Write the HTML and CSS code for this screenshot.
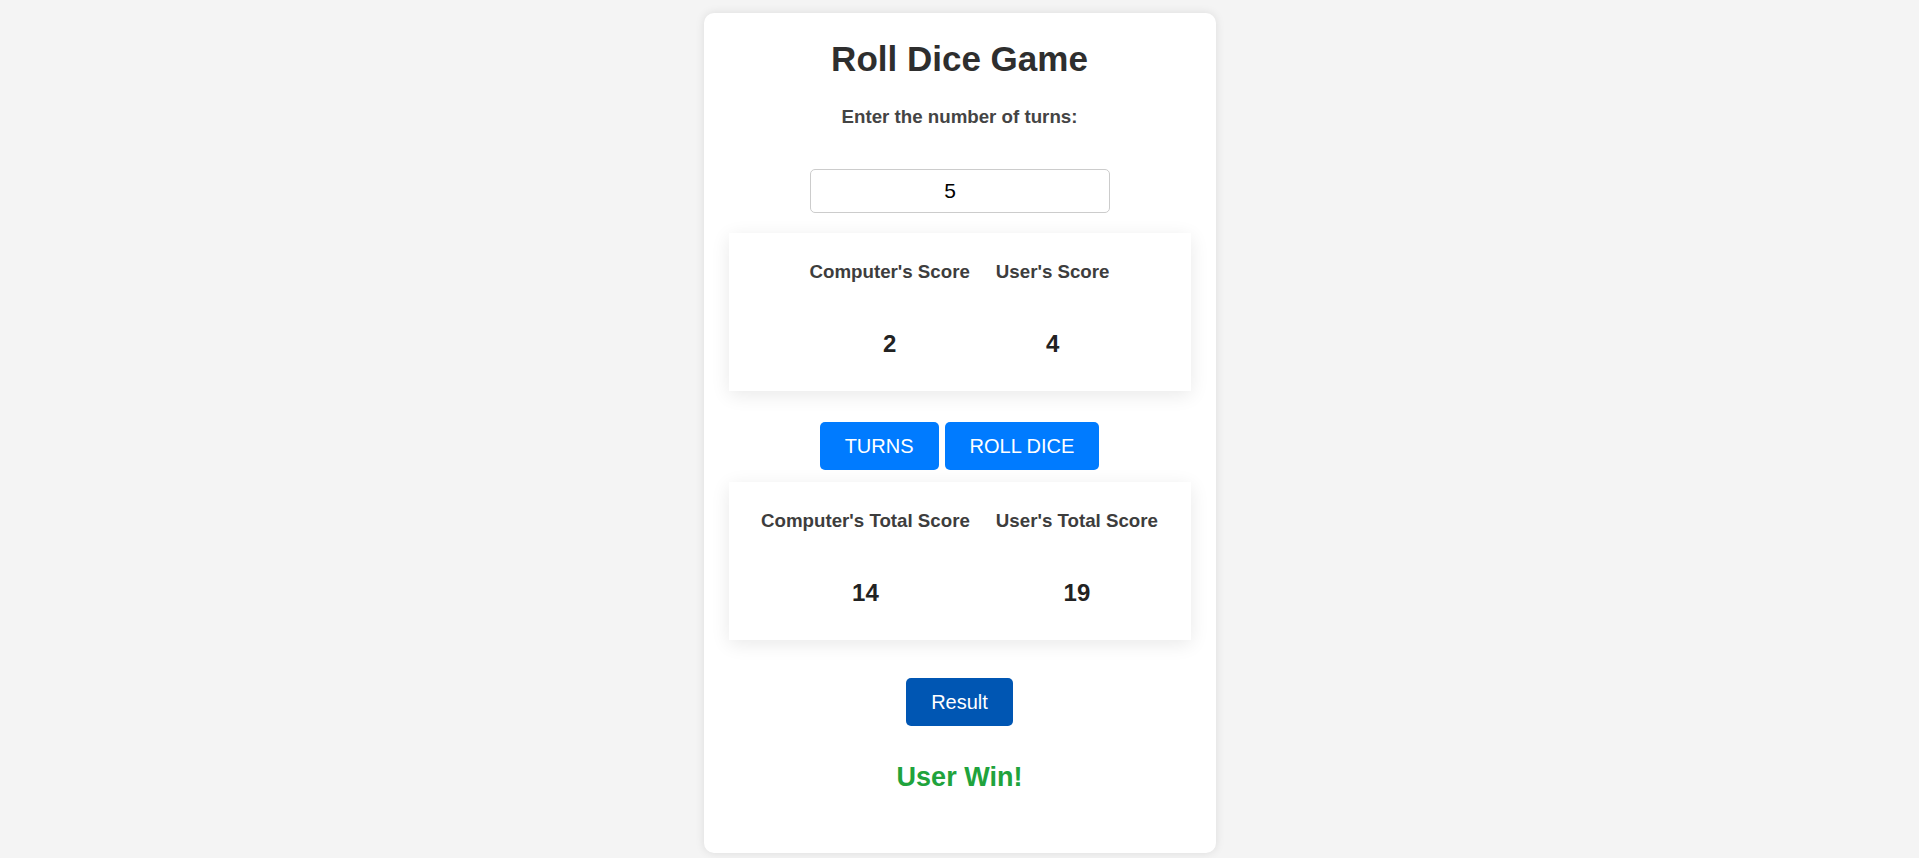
FILE: index.html
```html
<!DOCTYPE html>
<html lang="en">
<head>
<meta charset="UTF-8">
<title>Roll Dice Game</title>
<link rel="stylesheet" href="styles.css">
</head>
<body>
  <main class="card">
    <h1 class="title">Roll Dice Game</h1>
    <label class="label" for="turns">Enter the number of turns:</label>
    <input class="turns-input" id="turns" type="number" value="5">

    <section class="score-box">
      <div class="score-col">
        <h3 class="score-head">Computer's Score</h3>
        <h2 class="score-value">2</h2>
      </div>
      <div class="score-col">
        <h3 class="score-head">User's Score</h3>
        <h2 class="score-value">4</h2>
      </div>
    </section>

    <div class="actions">
      <button class="btn btn-primary">TURNS</button>
      <button class="btn btn-primary">ROLL DICE</button>
    </div>

    <section class="score-box score-box-total">
      <div class="score-col">
        <h3 class="score-head">Computer's Total Score</h3>
        <h2 class="score-value">14</h2>
      </div>
      <div class="score-col">
        <h3 class="score-head">User's Total Score</h3>
        <h2 class="score-value">19</h2>
      </div>
    </section>

    <div class="result-row">
      <button class="btn btn-dark">Result</button>
    </div>

    <p class="winner">User Win!</p>
  </main>
</body>
</html>
```

FILE: styles.css
```css
* {
  box-sizing: border-box;
}

html, body {
  margin: 0;
  padding: 0;
}

body {
  background: #f4f4f4;
  font-family: "Liberation Sans", Arial, sans-serif;
  display: flex;
  justify-content: center;
  padding-top: 13px;
  min-height: 858px;
}

.card {
  width: 512px;
  height: 840px;
  background: #ffffff;
  border-radius: 10px;
  box-shadow: 0 0 10px rgba(0, 0, 0, 0.1);
  padding: 0 25px 60px;
  display: flex;
  flex-direction: column;
  align-items: stretch;
  text-align: center;
}

.title {
  margin: 26px 0 0;
  font-size: 35px;
  line-height: 40px;
  font-weight: 700;
  color: #2e2e2e;
}

.label {
  display: block;
  margin-top: 27px;
  font-size: 18.72px;
  line-height: 22px;
  font-weight: 700;
  color: #444444;
}

.turns-input {
  display: block;
  align-self: center;
  margin-top: 41px;
  width: 300px;
  height: 44px;
  border: 1px solid #cccccc;
  border-radius: 5px;
  font-family: "Liberation Sans", Arial, sans-serif;
  font-size: 21px;
  text-align: center;
  color: #000000;
  background: #ffffff;
  padding: 0 19px 0 0;
  -moz-appearance: textfield;
}

.turns-input::-webkit-outer-spin-button,
.turns-input::-webkit-inner-spin-button {
  -webkit-appearance: none;
  margin: 0;
}

.score-box {
  margin-top: 20px;
  height: 158px;
  background: #ffffff;
  box-shadow: 0 4px 18px rgba(0, 0, 0, 0.09);
  display: flex;
  justify-content: center;
  gap: 26px;
}

.score-box-total {
  margin-top: 12px;
}

.score-col {
  display: flex;
  flex-direction: column;
  align-items: center;
}

.score-head {
  margin: 28px 0 0;
  font-size: 18.72px;
  line-height: 22px;
  font-weight: 700;
  color: #3d3d3d;
  white-space: nowrap;
}

.score-value {
  margin: 47px 0 0;
  font-size: 24px;
  line-height: 28px;
  font-weight: 700;
  color: #222222;
}

.actions {
  margin-top: 31px;
  display: flex;
  justify-content: center;
  gap: 6px;
}

.btn {
  height: 48px;
  padding: 0 25px;
  border: none;
  border-radius: 5px;
  font-family: "Liberation Sans", Arial, sans-serif;
  font-size: 20px;
  color: #ffffff;
  cursor: pointer;
}

.btn-primary {
  background: #007bff;
}

.btn-dark {
  background: #0056b3;
}

.result-row {
  margin-top: 38px;
  display: flex;
  justify-content: center;
}

.winner {
  margin: 36px 0 0;
  font-size: 27px;
  line-height: 31px;
  font-weight: 700;
  color: #20a33c;
}
```
